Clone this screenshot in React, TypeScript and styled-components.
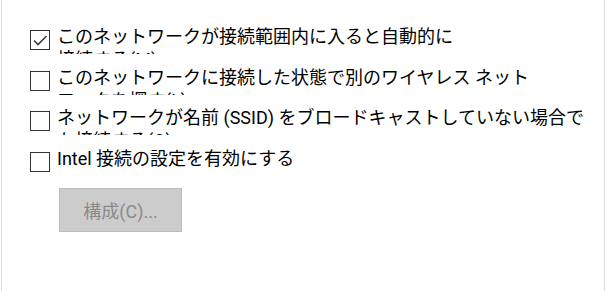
import React from 'react';
import styled, { createGlobalStyle } from 'styled-components';

const Global = createGlobalStyle`
  html, body {
    margin: 0;
    padding: 0;
    background: #ffffff;
  }
  body {
    font-family: Roboto, "Noto Sans CJK JP", sans-serif;
  }
`;

const Panel = styled.div`
  box-sizing: border-box;
  width: 604px;
  height: 291px;
  margin-left: 1px;
  border-left: 1px solid #dcdcdc;
  border-right: 1px solid #dcdcdc;
  padding: 25px 0 0 28px;
  background: #fff;
  display: flex;
  flex-direction: column;
  gap: 11.7px;
`;

const Row = styled.label`
  display: flex;
  align-items: flex-start;
  gap: 7px;
  cursor: default;
`;

const Box = styled.span`
  box-sizing: border-box;
  flex: none;
  width: 20px;
  height: 20px;
  margin-top: 5px;
  border: 1px solid #333;
  background: #fff;
  display: flex;
  align-items: center;
  justify-content: center;
`;

const Label = styled.span<{ $lines: number }>`
  display: block;
  font-family: Roboto, "Noto Sans CJK JP", sans-serif;
  font-size: 18px;
  line-height: 23px;
  color: #000;
  white-space: nowrap;
  height: ${(p) => (p.$lines > 1 ? '29px' : '23px')};
  overflow: hidden;
`;

const ConfigButton = styled.button`
  box-sizing: border-box;
  width: 123px;
  height: 44px;
  margin: 4px 0 0 29px;
  background: #cccccc;
  border: 1px solid #bdbdbd;
  color: #8a8a8a;
  font-family: Roboto, "Noto Sans CJK JP", sans-serif;
  font-size: 18px;
  padding: 0;
  cursor: default;
`;

const Check = () => (
  <svg width="18" height="18" viewBox="0 0 18 18" fill="none">
    <path d="M3 9.5 L7 13.5 L15.5 5" stroke="#3a3a3a" strokeWidth="1.6" />
  </svg>
);

type Opt = { lines: string[]; checked: boolean };

const options: Opt[] = [
  { lines: ['このネットワークが接続範囲内に入ると自動的に', '接続する(M)'], checked: true },
  { lines: ['このネットワークに接続した状態で別のワイヤレス ネット', 'ワークを探す(L)'], checked: false },
  { lines: ['ネットワークが名前 (SSID) をブロードキャストしていない場合で', 'も接続する(O)'], checked: false },
  { lines: ['Intel 接続の設定を有効にする'], checked: false },
];

export default function App() {
  return (
    <>
      <Global />
      <Panel>
        {options.map((o, i) => (
          <Row key={i}>
            <Box>{o.checked && <Check />}</Box>
            <Label $lines={o.lines.length}>
              {o.lines.map((l, j) => (
                <React.Fragment key={j}>
                  {j > 0 && <br />}
                  {l}
                </React.Fragment>
              ))}
            </Label>
          </Row>
        ))}
        <ConfigButton disabled>構成(C)...</ConfigButton>
      </Panel>
    </>
  );
}
